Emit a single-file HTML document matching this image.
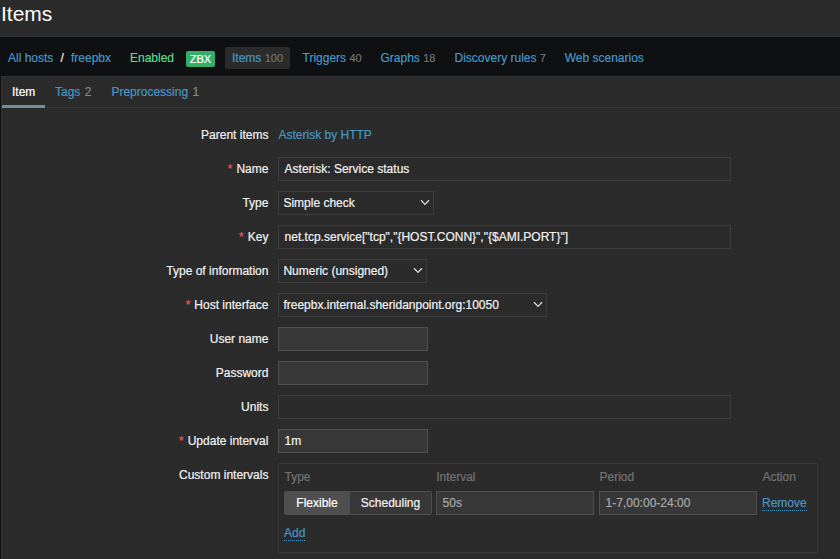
<!DOCTYPE html>
<html lang="en">
<head>
<meta charset="utf-8">
<title>Items</title>
<style>
*{box-sizing:border-box;margin:0;padding:0}
html,body{width:840px;height:559px;overflow:hidden}
body{-webkit-text-stroke:0.2px;background:#0e1012;color:#f2f2f2;font-family:"Liberation Sans",Arial,sans-serif;font-size:12px;line-height:14px;position:relative}
a{color:#4796c4;text-decoration:none}
.abs{position:absolute}
/* header */
.hdr{position:absolute;left:0;top:0;width:840px;height:37px;background:#2b2b2b;border-bottom:1px solid #303030}
.hdr h1{-webkit-text-stroke:0;position:absolute;left:1px;top:2px;font-size:21px;line-height:24px;font-weight:normal;color:#fff;white-space:nowrap}
/* nav bar */
.nav{position:absolute;left:0;top:37px;width:840px;height:39px;background:#0e1012}
.nav span,.nav a{position:absolute;top:14px;line-height:14px;white-space:nowrap}
.nav .cnt{color:#737373;position:static;font-size:11px}
.nav .sel{top:10px;height:22px;background:#2b2b2b;border-radius:2px;padding:4px 7px 0 7px}
.nav .zbx{top:14px;height:16px;width:29px;background:#34af67;color:#fff;border-radius:2px;text-align:center;line-height:16px;font-size:11px}
.green{color:#59db8f}
/* main container */
.main{position:absolute;left:1px;top:76px;width:845px;height:500px;background:#2b2b2b;border:1px solid #303030}
.tabs{position:absolute;left:0;top:0;width:843px;height:31px;border-bottom:1px solid #383838}
.tabs a,.tabs span.t{position:absolute;top:8px;line-height:14px;white-space:nowrap}
.tabs .cnt{color:#7d8a94;font-size:12px;margin-left:1px}
.tabs .ul{position:absolute;left:0;top:28px;width:43px;height:3px;background:#768d99}
/* form (coordinates relative to page) */
.lbl{position:absolute;right:571.6px;white-space:nowrap;line-height:14px;color:#f2f2f2}
.lbl i{font-style:normal;color:#e45959;margin-right:4px}
.ro,.in,.sl{position:absolute;left:278px;height:24px;line-height:22px;white-space:nowrap;overflow:hidden}
.ro{border:1px solid #3d3d3d;background:#2b2b2b;padding:0 5px 0 5.6px;color:#f2f2f2}
.in{border:1px solid #4f4f4f;background:#383838;padding:0 5px 0 5.6px;color:#f2f2f2}
.sl{border:1px solid #3d3d3d;background:#2b2b2b;padding:0 0 0 4.4px;color:#f2f2f2}
.sl svg{position:absolute;right:3px;top:7px}
.grey{color:#a8a8a8}
.th{position:absolute;top:470px;color:#737373;line-height:14px}
.dot{border-bottom:1px dotted #4796c4;line-height:14px}
</style>
</head>
<body>
<div class="hdr"><h1>Items</h1></div>

<div class="nav">
  <a style="left:8px">All hosts</a>
  <span style="left:60.4px;color:#f2f2f2">/</span>
  <a style="left:71px">freepbx</a>
  <span class="green" style="left:130px">Enabled</span>
  <span class="zbx" style="left:186px">ZBX</span>
  <a class="sel" style="left:225px">Items <span class="cnt">100</span></a>
  <a style="left:302.5px">Triggers <span class="cnt">40</span></a>
  <a style="left:380.5px">Graphs <span class="cnt">18</span></a>
  <a style="left:454.5px">Discovery rules <span class="cnt">7</span></a>
  <a style="left:564.7px">Web scenarios</a>
</div>

<div class="main">
  <div class="tabs">
    <span class="t" style="left:10px;color:#fff">Item</span>
    <a style="left:53px">Tags <span class="cnt">2</span></a>
    <a style="left:109.4px">Preprocessing <span class="cnt">1</span></a>
    <div class="ul"></div>
  </div>
</div>

<!-- form rows -->
<div class="lbl" style="top:128px">Parent items</div>
<a class="abs" style="left:278.5px;top:128px;line-height:14px">Asterisk by HTTP</a>

<div class="lbl" style="top:162px"><i>*</i>Name</div>
<div class="ro" style="top:157px;width:453px">Asterisk: Service status</div>

<div class="lbl" style="top:196px">Type</div>
<div class="sl" style="top:191px;width:156px">Simple check<svg width="10" height="7" viewBox="0 0 10 7"><path d="M1 1.2 L5 5.4 L9 1.2" fill="none" stroke="#dcdcdc" stroke-width="1.3"/></svg></div>

<div class="lbl" style="top:230px"><i>*</i>Key</div>
<div class="ro" style="top:225px;width:453px">net.tcp.service["tcp","{HOST.CONN}","{$AMI.PORT}"]</div>

<div class="lbl" style="top:264px">Type of information</div>
<div class="sl" style="top:259px;width:149px">Numeric (unsigned)<svg width="10" height="7" viewBox="0 0 10 7"><path d="M1 1.2 L5 5.4 L9 1.2" fill="none" stroke="#dcdcdc" stroke-width="1.3"/></svg></div>

<div class="lbl" style="top:298px"><i>*</i>Host interface</div>
<div class="sl" style="top:293px;width:269px">freepbx.internal.sheridanpoint.org:10050<svg width="10" height="7" viewBox="0 0 10 7"><path d="M1 1.2 L5 5.4 L9 1.2" fill="none" stroke="#dcdcdc" stroke-width="1.3"/></svg></div>

<div class="lbl" style="top:332px">User name</div>
<div class="in" style="top:327px;width:150px"></div>

<div class="lbl" style="top:366px">Password</div>
<div class="in" style="top:361px;width:150px"></div>

<div class="lbl" style="top:400px">Units</div>
<div class="ro" style="top:395px;width:453px"></div>

<div class="lbl" style="top:434px"><i>*</i>Update interval</div>
<div class="in" style="top:429px;width:150px">1m</div>

<div class="lbl" style="top:468px">Custom intervals</div>
<div class="abs" style="left:278px;top:463px;width:540px;height:90px;border:1px solid #383838"></div>
<div class="th" style="left:284.5px">Type</div>
<div class="th" style="left:436.2px">Interval</div>
<div class="th" style="left:599.5px">Period</div>
<div class="th" style="left:762.5px">Action</div>

<div class="abs" style="left:284px;top:491px;width:66px;height:24px;background:#4f4f4f;border:1px solid #4f4f4f;border-radius:2px 0 0 2px;text-align:center;line-height:22px;color:#fff">Flexible</div>
<div class="abs" style="left:350px;top:491px;width:82px;height:24px;background:#383838;border:1px solid #4f4f4f;border-left:0;border-radius:0 2px 2px 0;text-align:center;line-height:22px;color:#f2f2f2">Scheduling</div>
<div class="in grey" style="left:436px;top:491px;width:158px">50s</div>
<div class="in grey" style="left:599px;top:491px;width:158px">1-7,00:00-24:00</div>
<a class="abs dot" style="left:762px;top:496px">Remove</a>
<a class="abs dot" style="left:284px;top:526px">Add</a>

</body>
</html>
